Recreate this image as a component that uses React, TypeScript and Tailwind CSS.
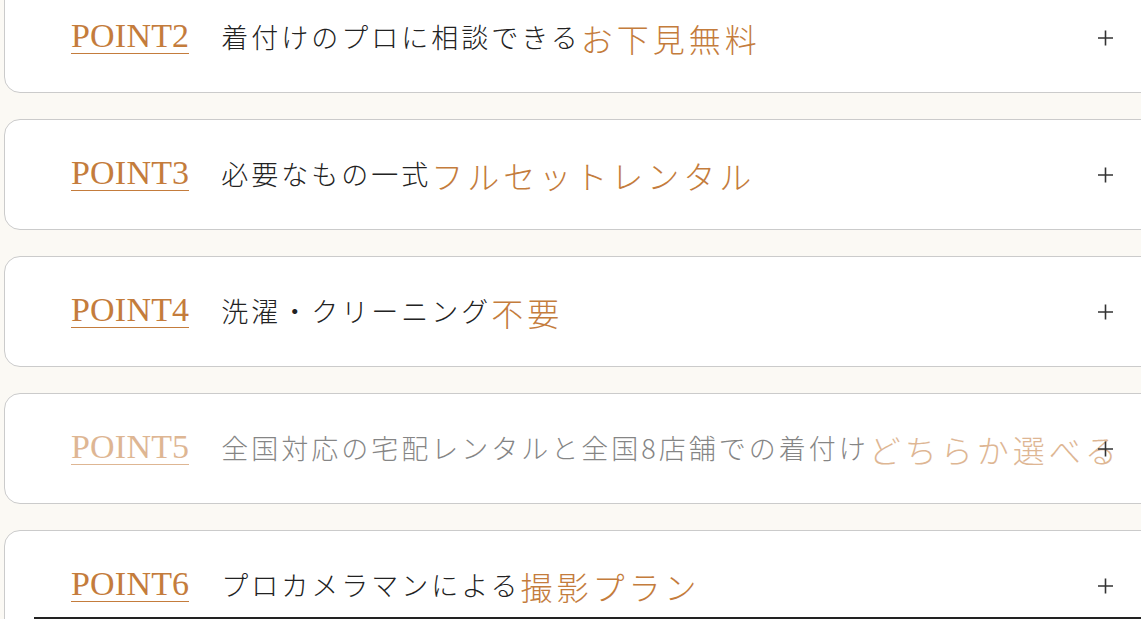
import React from "react";

interface PointItem {
  num: number;
  text: string;
  accent: string;
  faded?: boolean;
}

const items: PointItem[] = [
  { num: 2, text: "着付けのプロに相談できる", accent: "お下見無料" },
  { num: 3, text: "必要なもの一式", accent: "フルセットレンタル" },
  { num: 4, text: "洗濯・クリーニング", accent: "不要" },
  { num: 5, text: "全国対応の宅配レンタルと全国8店舗での着付け", accent: "どちらか選べる", faded: true },
  { num: 6, text: "プロカメラマンによる", accent: "撮影プラン" },
];

const PlusIcon = () => (
  <svg width="17" height="17" viewBox="0 0 17 17" className="absolute left-[1092px] top-1/2 -translate-y-1/2">
    <path d="M8.5 1v15M1 8.5h15" stroke="#333" strokeWidth="1.6" />
  </svg>
);

const PointCard: React.FC<{ item: PointItem }> = ({ item }) => {
  return (
    <div className="relative h-[111px] shrink-0 overflow-hidden rounded-2xl border border-[#cbcbcb] bg-white">
      <div
        className={`flex h-full items-center whitespace-nowrap pl-[66px] ${item.faded ? "opacity-55" : ""}`}
      >
        <span className="-mt-[2px] border-b-[1.5px] border-[#c47c3c] font-['Liberation_Serif',serif] text-[34px] leading-[34px] tracking-[0.2px] text-[#c47c3c]">
          POINT{item.num}
        </span>
        <span className="ml-[32px] font-['Noto_Sans_CJK_JP',sans-serif] text-[27px] font-light tracking-[3px] text-[#222]">
          {item.text}
        </span>
        <span className="font-['Noto_Sans_CJK_JP',sans-serif] text-[32px] font-light tracking-[4px] text-[#c47c3c]">
          {item.accent}
        </span>
      </div>
      <PlusIcon />
    </div>
  );
};

export default function App() {
  return (
    <div className="relative h-[619px] w-full overflow-hidden bg-[#fbf9f4]">
      <div className="-mt-[18px] ml-1 flex w-[1180px] flex-col gap-[26px]">
        {items.map((item) => (
          <PointCard key={item.num} item={item} />
        ))}
      </div>
      <div className="absolute bottom-0 left-[34px] right-0 h-[2px] bg-[#222]" />
    </div>
  );
}
